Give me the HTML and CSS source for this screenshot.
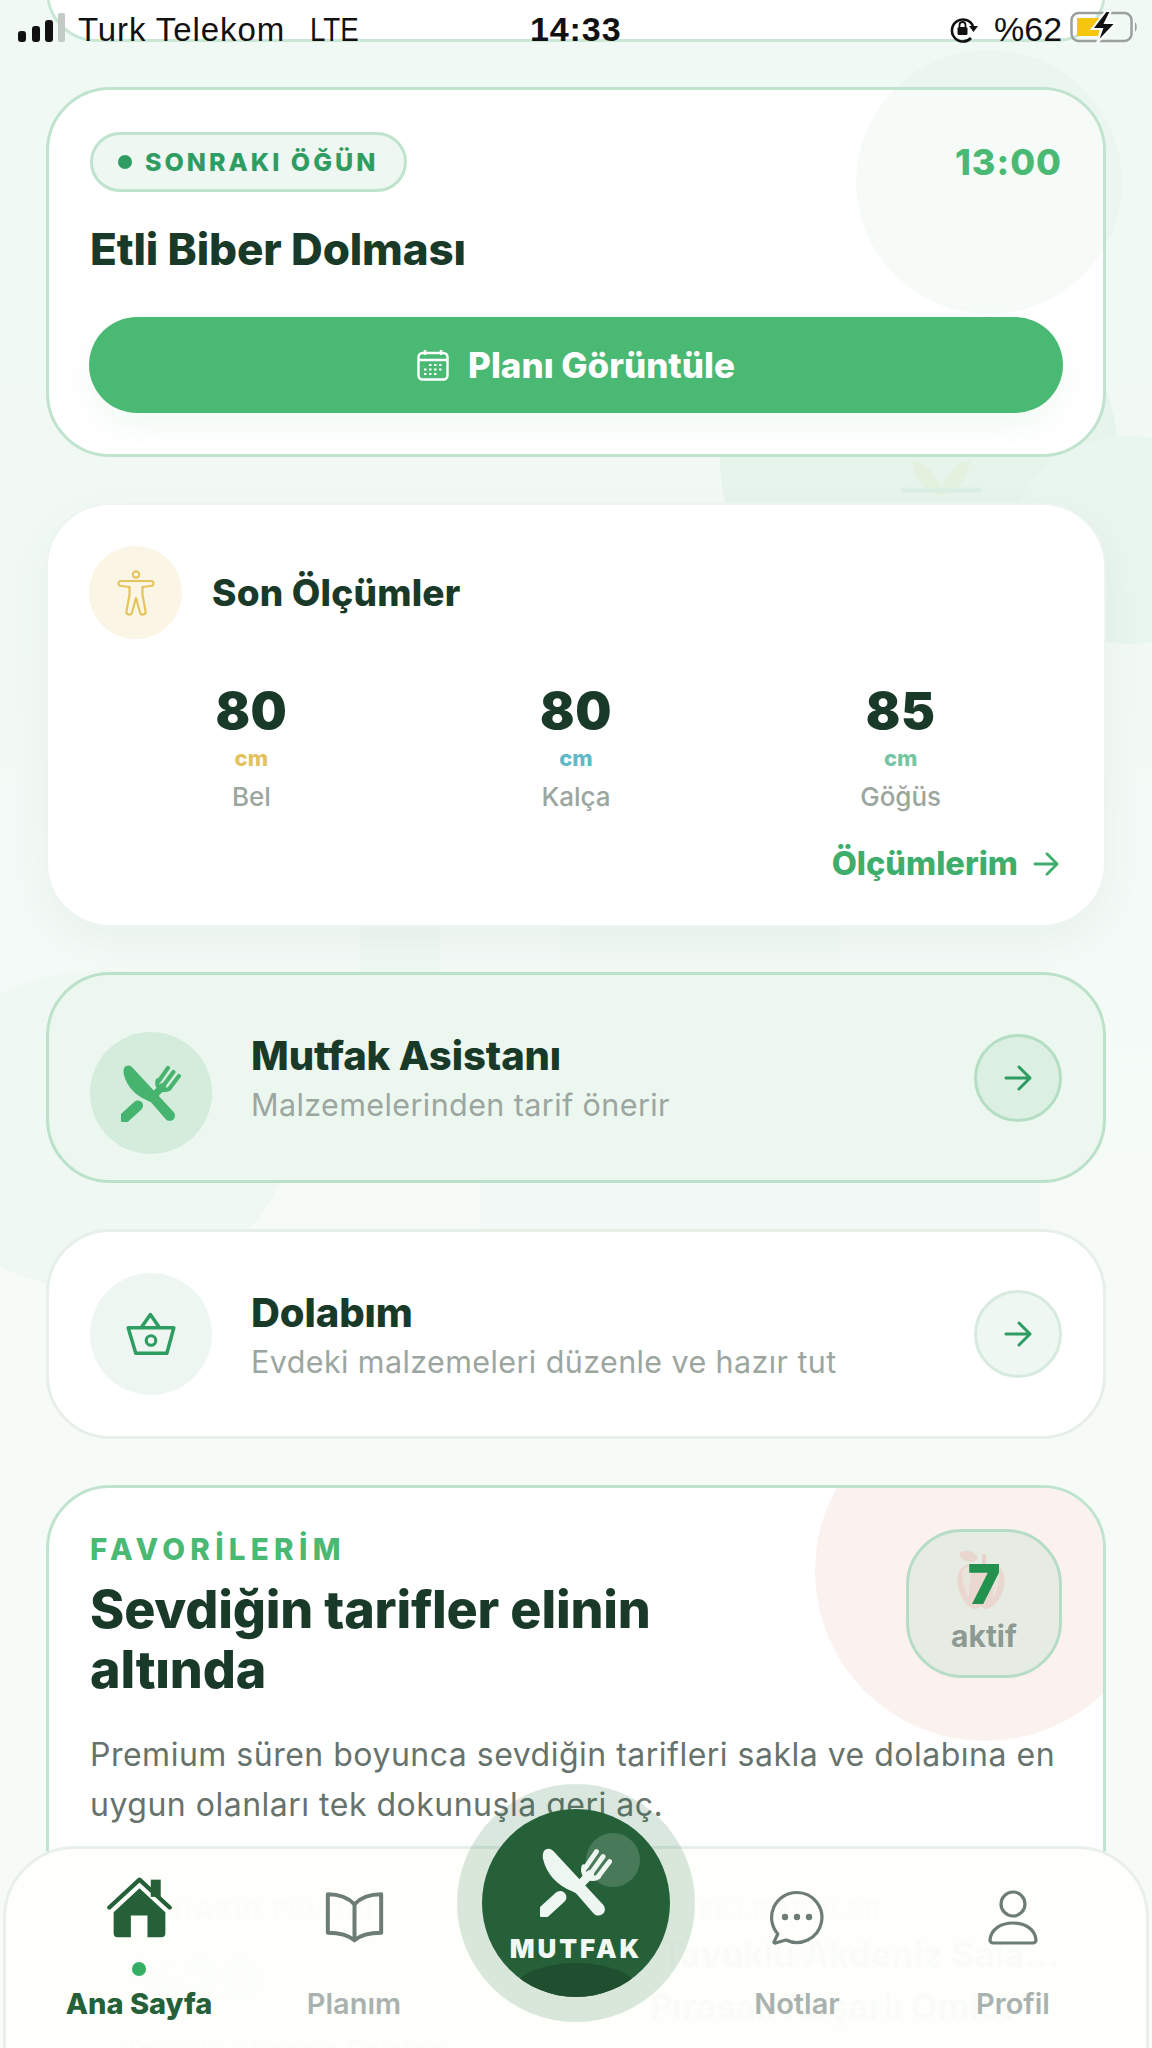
FILE: index.html
```html
<!DOCTYPE html>
<html lang="tr">
<head>
<meta charset="utf-8">
<title>Ana Sayfa</title>
<meta name="viewport" content="width=device-width,initial-scale=1">
<link rel="stylesheet" href="styles.css">
</head>
<body>
<svg class="defs" width="0" height="0" aria-hidden="true">
  <symbol id="cutlery" viewBox="300 262 216 212">
    <path d="M304 452 L352 408" fill="none" stroke="currentColor" stroke-width="38" stroke-linecap="round" transform="translate(8 6)"/>
    <path d="M322 268C309 268 305 285 309 301C319 342 350 377 396 396L408 402L462 464C472 474 488 470 494 459C498 449 494 441 488 435L340 275C334 269 328 266 322 268Z" fill="currentColor"/>
    <path d="M436 325L470 276M455 339L490 291M474 353L510 306M432 322C426 346 446 368 476 352" fill="none" stroke="currentColor" stroke-width="15" stroke-linecap="round"/>
    <path d="M450 345L420 376" fill="none" stroke="currentColor" stroke-width="26" stroke-linecap="round"/>
  </symbol>
  <symbol id="arrow" viewBox="0 0 28 26">
    <path d="M2 13H26M15 2L26 13L15 24" fill="none" stroke="currentColor" stroke-width="3" stroke-linecap="round" stroke-linejoin="round"/>
  </symbol>
</svg>

<div class="screen">
  <div class="decor">
    <span class="blob blob-top"></span>
    <span class="blob blob-mid"></span>
    <span class="blob blob-right"></span>
    <span class="blob blob-left"></span>
    <span class="strip strip-a"></span>
    <span class="strip strip-b"></span>
    <span class="strip strip-c"></span>
    <svg class="leaf" viewBox="0 0 90 50"><path d="M45 40C30 36 18 24 16 4C32 8 44 20 45 40C46 20 58 8 74 4C72 24 60 36 45 40Z" fill="#e4f1de"/><path d="M5 34H85" stroke="#dcefe4" stroke-width="5"/></svg>
  </div>

  <header class="status">
    <svg class="signal" viewBox="0 0 48 30"><rect x="0" y="18" width="8" height="11" rx="3" fill="#111"/><rect x="14" y="13" width="8" height="16" rx="3" fill="#111"/><rect x="27" y="7" width="8" height="22" rx="3" fill="#111"/><rect x="40" y="0" width="7" height="29" rx="2" fill="#c3cbc7"/></svg>
    <span class="carrier">Turk Telekom</span>
    <span class="net">LTE</span>
    <span class="clock">14:33</span>
    <svg class="rotlock" viewBox="0 0 30 28"><path d="M22 22A11 11 0 1 1 24 10" fill="none" stroke="#111" stroke-width="2.6"/><path d="M20 10H29L24.500 16Z" fill="#111"/><rect x="8.500" y="11" width="10" height="8" rx="1.500" fill="#111"/><path d="M10.500 11V9a3 3 0 0 1 6 0V11" fill="none" stroke="#111" stroke-width="1.800"/></svg>
    <span class="pct">%62</span>
    <svg class="battery" viewBox="0 0 68 32"><rect x="1.500" y="2" width="60" height="28" rx="7" fill="none" stroke="#9aa09d" stroke-width="2.500"/><path d="M7 7H33L28 25H7Z" fill="#f6c60f"/><path d="M65 11a4 6 0 0 1 0 10Z" fill="#9aa09d"/><path d="M36 0L22 18H32L27 32L46 12H35L41 0Z" fill="#111" stroke="#fff" stroke-width="2"/></svg>
  </header>

  <main class="feed">
    <div class="prev-card"></div>

    <section class="card card-meal">
      <span class="meal-glow"></span>
      <div class="meal-top">
        <span class="pill"><i class="pill-dot"></i>SONRAKI ÖĞÜN</span>
        <span class="meal-time">13:00</span>
      </div>
      <h2 class="meal-name">Etli Biber Dolması</h2>
      <a class="btn-plan">
        <svg viewBox="0 0 32 32" class="cal"><rect x="1.500" y="4" width="29" height="26.500" rx="4" fill="none" stroke="#fff" stroke-width="2.400"/><path d="M2 11H30M8 1V6M24 1V6" stroke="#fff" stroke-width="2.400" fill="none"/><path d="M12 16h2.500M17 16h2.500M22 16h2.500M7 20.500h2.500M12 20.500h2.500M17 20.500h2.500M22 20.500h2.500M7 25h2.500M12 25h2.500M17 25h2.500" stroke="#fff" stroke-width="2.200"/></svg>
        Planı Görüntüle
      </a>
    </section>

    <section class="card card-measure">
      <div class="measure-head">
        <span class="measure-ic">
          <svg viewBox="0 0 38 46"><circle cx="19" cy="4.500" r="3.200" fill="none" stroke="#e6c45c" stroke-width="2.200"/><path d="M4 11H34a2.500 2.500 0 0 1 0 5L25.500 17V25L28.500 41a2.800 2.800 0 0 1-5.500 1.500L19 28L15 42.500a2.800 2.800 0 0 1-5.500-1.500L12.500 25V17L4 16a2.500 2.500 0 0 1 0-5Z" fill="none" stroke="#e6c45c" stroke-width="2.200" stroke-linejoin="round"/></svg>
        </span>
        <h3 class="measure-title">Son Ölçümler</h3>
      </div>
      <div class="stats">
        <div class="stat"><b class="stat-num">80</b><span class="stat-unit unit-bel">cm</span><span class="stat-label">Bel</span></div>
        <div class="stat"><b class="stat-num">80</b><span class="stat-unit unit-kalca">cm</span><span class="stat-label">Kalça</span></div>
        <div class="stat"><b class="stat-num">85</b><span class="stat-unit unit-gogus">cm</span><span class="stat-label">Göğüs</span></div>
      </div>
      <a class="link-more">Ölçümlerim <svg class="link-arrow"><use href="#arrow"/></svg></a>
    </section>

    <section class="card card-row row-kitchen">
      <span class="row-ic ic-kitchen"><svg class="ic-cutlery"><use href="#cutlery"/></svg></span>
      <div class="row-text">
        <h3 class="row-title">Mutfak Asistanı</h3>
        <p class="row-sub">Malzemelerinden tarif önerir</p>
      </div>
      <span class="row-go go-kitchen"><svg><use href="#arrow"/></svg></span>
    </section>

    <section class="card card-row row-pantry">
      <span class="row-ic ic-pantry">
        <svg viewBox="185 925 170 145" class="ic-basket"><path d="M198 978H342L320 1058H222Z M240 976L268 936L296 976" fill="none" stroke="currentColor" stroke-width="11" stroke-linejoin="round"/><circle cx="270" cy="1018" r="15" fill="none" stroke="currentColor" stroke-width="10"/></svg>
      </span>
      <div class="row-text">
        <h3 class="row-title">Dolabım</h3>
        <p class="row-sub">Evdeki malzemeleri düzenle ve hazır tut</p>
      </div>
      <span class="row-go go-pantry"><svg><use href="#arrow"/></svg></span>
    </section>

    <section class="card card-fav">
      <span class="fav-glow"></span>
      <div class="fav-top">
        <div>
          <div class="eyebrow">FAVORİLERİM</div>
          <h2 class="fav-title">Sevdiğin tarifler elinin altında</h2>
        </div>
        <div class="fav-badge">
          <svg class="apple" viewBox="0 0 52 58"><path d="M26 16C18 11 4 12 3 28C3 42 12 56 20 57C24 57 24 55 26 55C28 55 28 57 32 57C40 56 49 42 49 28C48 12 34 11 26 16Z" fill="#ead8d0"/><path d="M8 22C9 17 13 16 17 16L14 46C10 38 8 30 8 22Z M44 22C43 17 39 16 35 16L38 46C42 38 44 30 44 22Z" fill="#e9e7df" opacity=".8"/><path d="M29 4V16" stroke="#e3d3c9" stroke-width="4"/><ellipse cx="14" cy="6" rx="9" ry="5" fill="#e9d6cd" transform="rotate(15 14 6)"/></svg>
          <b class="badge-num">7</b>
          <span class="badge-label">aktif</span>
        </div>
      </div>
      <p class="fav-text">Premium süren boyunca sevdiğin tarifleri sakla ve dolabına en uygun olanları tek dokunuşla geri aç.</p>
      <div class="fav-grid">
        <div class="fav-box">
          <div class="box-label label-ready">HAZIR FAVORİ</div>
          <div class="box-num">%20</div>
          <div class="box-line">Tavuklu Akdeniz Salatası</div>
        </div>
        <div class="fav-box">
          <div class="box-label label-added">EKLENENLER</div>
          <div class="box-item">Tavuklu Akdeniz Sala...</div>
          <div class="box-item item-2">Pırasalı Kaşarlı Omlet</div>
        </div>
      </div>
    </section>
  </main>

  <nav class="tabbar">
    <a class="tab tab-on">
      <svg class="tab-ic ic-home" viewBox="140 80 196 184"><path d="M272 88H302V140H272Z" fill="currentColor"/><path d="M160 186L238 114L316 186V250a12 12 0 0 1-12 12H262V196H212V262H172a12 12 0 0 1-12-12Z" fill="currentColor"/><path d="M147 172L238 88L329 172" fill="none" stroke="currentColor" stroke-width="13" stroke-linecap="round" stroke-linejoin="round"/></svg>
      <i class="tab-dot"></i>
      <span>Ana Sayfa</span>
    </a>
    <a class="tab">
      <svg class="tab-ic ic-book" viewBox="795 120 176 156"><path d="M883 160C860 136 830 130 803 130V245C830 245 860 248 883 268C905 248 935 245 963 245V130C935 130 905 136 883 160ZM883 160V268" fill="none" stroke="currentColor" stroke-width="12" stroke-linejoin="round"/></svg>
      <span>Planım</span>
    </a>
    <div class="tab-mid">
      <a class="fab">
        <span class="fab-core">
          <i class="fab-shine"></i>
          <i class="fab-shade"></i>
          <svg class="fab-ic"><use href="#cutlery"/></svg>
          <b class="fab-label">MUTFAK</b>
        </span>
      </a>
    </div>
    <a class="tab">
      <svg class="tab-ic ic-chat" viewBox="0 0 56 56"><path d="M28 2.500a25 25 0 1 1-11 47.500L6.500 53a1 1 0 0 1-1.400-1.300L8.800 44A25 25 0 0 1 28 2.500Z" fill="none" stroke="currentColor" stroke-width="3.200" stroke-linejoin="round"/><circle cx="16" cy="27" r="3.200" fill="currentColor"/><circle cx="28" cy="27" r="3.200" fill="currentColor"/><circle cx="40" cy="27" r="3.200" fill="currentColor"/></svg>
      <span>Notlar</span>
    </a>
    <a class="tab">
      <svg class="tab-ic ic-user" viewBox="0 0 52 56"><circle cx="26" cy="14" r="12" fill="none" stroke="currentColor" stroke-width="3.200"/><path d="M3 50C4 39 14 33 26 33C38 33 48 39 49 50a3 3 0 0 1-3 3H6a3 3 0 0 1-3-3Z" fill="none" stroke="currentColor" stroke-width="3.200" stroke-linejoin="round"/></svg>
      <span>Profil</span>
    </a>
  </nav>
</div>
</body>
</html>
```

FILE: styles.css
```css
:root{--ink:#1a3a29;--green:#4ab974;--green-d:#2f9c62;--forest:#256038;--muted:#9ca6a1}
*{box-sizing:border-box}
html,body{margin:0;padding:0}
body{font-family:Inter,"Noto Sans",sans-serif;color:var(--ink)}
h2,h3,p{margin:0}
a{display:block}
.defs{position:absolute}

.screen{position:relative;width:1152px;height:2048px;overflow:hidden;background:linear-gradient(180deg,#f0f9f4 0,#f2f9f5 30%,#f6fbf8 60%,#f7fbf8 100%)}

/* faint art behind the cards */
.decor{position:absolute;inset:0}
.blob{position:absolute;border-radius:50%;background:#ebf6f0}
.blob-top{left:856px;top:50px;width:266px;height:264px}
.blob-mid{left:720px;top:258px;width:398px;height:398px;background:#e6f4ec}
.blob-right{left:1010px;top:436px;width:240px;height:208px;background:#e9f5ef}
.blob-left{left:-90px;top:970px;width:380px;height:320px;background:#f0f8f3}
.strip{position:absolute;background:#f0f8f3}
.strip-a{left:360px;top:926px;width:80px;height:48px}
.strip-b{left:560px;top:926px;width:280px;height:48px;background:#f2f9f5}
.strip-c{left:480px;top:1183px;width:560px;height:46px;background:#f3f9f6}
.leaf{position:absolute;left:896px;top:456px;width:90px;height:50px}

.status{position:absolute;left:0;top:0;right:0;height:44px;z-index:5;font-family:"Liberation Sans",Arial,sans-serif;font-size:33px;color:#111}
.status>*{position:absolute}
.signal{left:18px;top:13px;width:48px;height:30px}
.carrier{left:78px;top:11px;letter-spacing:.9px}
.net{left:310px;top:11px;transform:scaleX(.84);transform-origin:left center}
.clock{left:530px;top:10px;font-weight:700;font-size:34px;letter-spacing:.9px}
.rotlock{left:949px;top:16px;width:30px;height:28px}
.pct{left:994px;top:10px;font-size:34px}
.battery{left:1070px;top:11px;width:68px;height:32px}

.feed{position:relative;z-index:1;padding:0 46px;display:flex;flex-direction:column;gap:47px}
.prev-card{height:101px;margin:-59px 0 -2px;background:#fff;border:3px solid #c9e7d4;border-radius:64px}

.card{position:relative;background:#fff;border:3px solid #bfe3cd;border-radius:64px;overflow:hidden}

.card-meal{height:370px;margin-bottom:-1px;padding:42px 41px 0}
.meal-glow{position:absolute;left:807px;top:-40px;width:266px;height:264px;border-radius:50%;background:#f6fbf8}
.meal-top{position:relative;display:flex;justify-content:space-between;align-items:center}
.pill{display:inline-flex;align-items:center;height:60px;padding:0 26px 0 25px;border:3px solid #bfe3cd;border-radius:30px;background:#eef7f1;color:var(--green-d);font-size:25px;font-weight:800;letter-spacing:3px}
.pill-dot{width:14px;height:14px;border-radius:50%;background:var(--green-d);margin-right:13px}
.meal-time{font-size:36px;font-weight:800;color:var(--green);letter-spacing:1px}
.meal-name{position:relative;margin-top:31px;font-size:44px;line-height:52px;font-weight:800;letter-spacing:-.15px}
.btn-plan{position:relative;display:flex;align-items:center;justify-content:center;gap:19px;height:96px;margin:42px -1px 0;border-radius:48px;background:var(--green);color:#fff;font-size:35px;font-weight:800;box-shadow:0 14px 30px rgba(74,185,116,.08)}
.cal{width:32px;height:32px}

.card-measure{height:424px;margin-bottom:-2px;padding:41px 41px 0;border:2px solid #eef4f0;border-radius:64px;box-shadow:0 16px 40px rgba(60,120,90,.06)}
.measure-head{display:flex;align-items:center;gap:30px}
.measure-ic{display:flex;align-items:center;justify-content:center;width:93px;height:93px;border-radius:50%;background:#fbf5e6}
.measure-ic svg{width:38px;height:46px}
.measure-title{font-size:37px;font-weight:800;letter-spacing:.2px}
.stats{display:grid;grid-template-columns:repeat(3,1fr);margin-top:44px}
.stat{display:flex;flex-direction:column;align-items:center}
.stat-num{font-size:51px;line-height:56px;font-weight:900;letter-spacing:.5px}
.stat-unit{margin-top:5px;font-size:22px;line-height:28px;font-weight:800}
.unit-bel{color:#e2c25e}
.unit-kalca{color:#5fb9c6}
.unit-gogus{color:#74c6a3}
.stat-label{margin-top:8px;font-size:26px;line-height:34px;font-weight:500;color:var(--muted)}
.link-more{display:flex;justify-content:flex-end;align-items:center;gap:15px;margin-top:32px;padding-right:4px;font-size:32.500px;line-height:36px;font-weight:800;color:#3fae6c}
.link-arrow{width:26px;height:24px}

.card-row{display:flex;align-items:center;height:210px;padding:0 41px;border-radius:64px}
.row-kitchen{height:211px;margin-bottom:-1px;background:#ecf7ef;border-color:#bbe1c9}
.row-pantry{border-color:#e7efe9}
.row-ic{flex:none;display:flex;align-items:center;justify-content:center;width:122px;height:122px;border-radius:50%}
.ic-kitchen{margin-top:30px;background:#d3ecdc;color:#46b36f}
.ic-cutlery{width:60px;height:58px}
.ic-pantry{background:#eef6f2;color:#2f9c62}
.ic-basket{width:54px;height:46px}
.row-text{flex:1;margin:3px 0 0 39px}
.row-title{font-size:40px;line-height:46px;font-weight:800;letter-spacing:-.1px}
.row-sub{margin-top:6px;font-size:30.500px;line-height:40px;color:var(--muted);letter-spacing:.4px}
.row-go{flex:none;display:flex;align-items:center;justify-content:center;width:88px;height:88px;border-radius:50%;color:var(--green-d)}
.row-go svg{width:28px;height:26px}
.go-kitchen{background:#dcefe3;border:3px solid #b3dec3}
.go-pantry{background:#eef7f1;border:3px solid #d6eadd}

.card-fav{height:700px;margin-top:-1px;padding:41px 41px 0}
.fav-glow{position:absolute;left:766px;top:-87px;width:340px;height:340px;border-radius:50%;background:#fbf2f0}
.fav-top{position:relative;display:flex;justify-content:space-between}
.eyebrow{margin-top:3px;font-size:29.500px;line-height:34px;font-weight:800;letter-spacing:5.300px;color:var(--green)}
.fav-title{width:640px;margin-top:14px;font-size:52px;line-height:60px;font-weight:800;letter-spacing:-.2px}
.fav-badge{position:relative;display:flex;flex-direction:column;align-items:center;width:156px;height:149px;border:3px solid #b7dcc5;border-radius:56px;background:#e6ece4}
.apple{position:absolute;left:45px;top:18px;width:54px;height:60px}
.badge-num{position:relative;margin-top:22px;font-size:55px;line-height:60px;font-weight:900;color:#23924f}
.badge-label{position:relative;margin-top:4px;font-size:30px;line-height:36px;font-weight:700;color:#8d9a93}
.fav-text{position:relative;margin-top:30px;font-size:32px;line-height:50px;color:#66736d;letter-spacing:.5px}
.fav-grid{display:grid;grid-template-columns:1fr 1fr;gap:24px;margin-top:36px}
.fav-box{height:240px;border-radius:36px;background:#f4f7f3}
.box-label{padding-top:30px;font-size:24px;line-height:30px;font-weight:700;letter-spacing:3px;color:#7c8a83}
.label-ready{padding-left:84px}
.label-added{padding-left:110px}
.box-num{margin:24px 0 0 36px;font-size:56px;line-height:60px;font-weight:900;color:#4ab974}
.box-line{margin:24px 0 0 32px;font-size:28px;color:#66736d;white-space:nowrap}
.box-item{margin:8px 0 0 72px;font-size:35px;line-height:40px;font-weight:700;color:var(--ink);white-space:nowrap}
.item-2{margin:12px 0 0 62px}

.tabbar{position:absolute;z-index:3;left:3px;right:3px;top:1846px;height:220px;padding:0 0 0 26px;display:grid;grid-template-columns:214px 216px 228px 214px 218px;background:rgba(254,255,251,.985);border:3px solid #e9f0eb;border-radius:72px 72px 0 0}
.tab{display:flex;flex-direction:column;align-items:center;height:170px;position:relative;font-size:29px;font-weight:600;color:#a9b2ae}
.tab span{position:absolute;left:-20px;right:-20px;top:138px;text-align:center;line-height:34px}
.tab-on{color:var(--forest);font-weight:800}
.tab-dot{position:absolute;top:113px;width:14px;height:14px;border-radius:50%;background:#34ae62}
.tab-ic{position:absolute}
.ic-home{top:28px;width:65px;height:61px;color:var(--forest)}
.ic-book{top:42px;width:59px;height:52px;color:#6d7c76}
.ic-chat{top:41px;width:56px;height:56px;color:#6d7c76}
.ic-user{top:41px;width:52px;height:56px;color:#6d7c76}

.tab-mid{position:relative}
.fab{position:absolute;left:50%;top:-65px;width:238px;height:238px;margin-left:-119px;padding:25px;border-radius:50%;background:rgba(37,110,65,.17)}
.fab-core{position:relative;display:block;width:188px;height:188px;border-radius:50%;overflow:hidden;background:var(--forest);color:#eef6f1}
.fab-shine{position:absolute;left:104px;top:24px;width:54px;height:54px;border-radius:50%;background:rgba(255,255,255,.16)}
.fab-shade{position:absolute;left:30px;top:154px;width:128px;height:60px;border-radius:50%;background:#1f4f2e}
.fab-ic{position:absolute;left:58px;top:38px;width:72px;height:70px}
.fab-label{position:absolute;left:0;right:0;top:124px;text-align:center;font-size:26px;line-height:32px;font-weight:900;letter-spacing:3px;color:#f1f7f3}
```
